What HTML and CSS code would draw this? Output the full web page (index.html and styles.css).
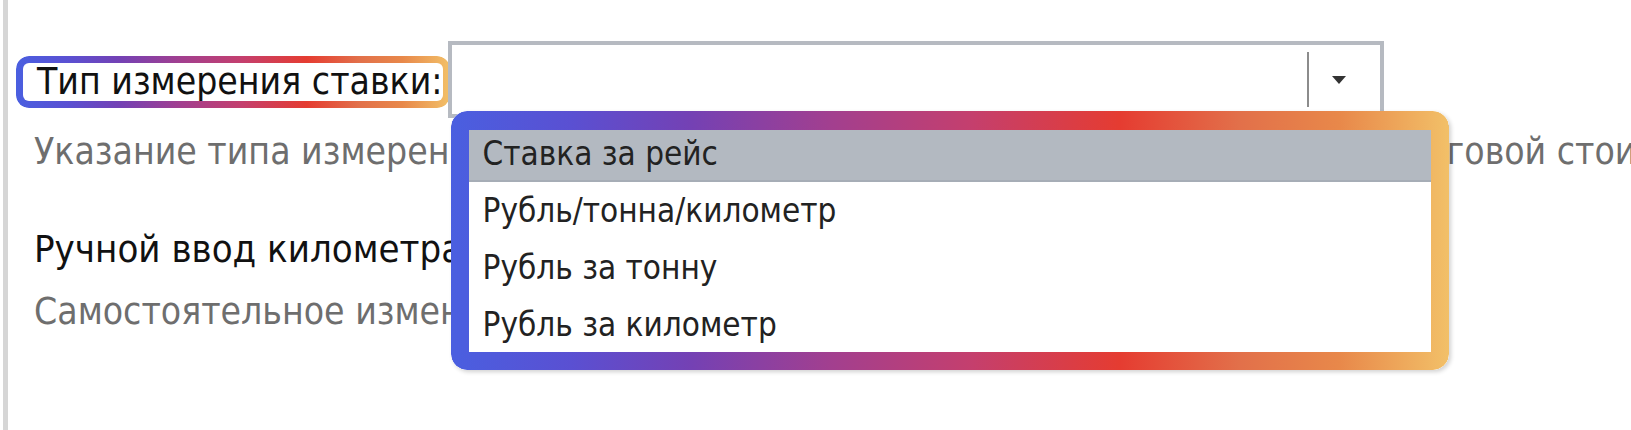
FILE: index.html
```html
<!DOCTYPE html>
<html>
	<head>
		<meta charset="UTF-8">
		<title>Тип измерения ставки</title>
		<link rel="stylesheet" href="styles.css">
	</head>
	<body>
		<div class="panel">
			<div class="field">
				<span class="field_label hl">Тип измерения ставки:</span>
				<div class="combo">
					<div class="combo_value"></div>
					<div class="combo_sep"></div>
					<div class="combo_btn"><i class="combo_arrow"></i></div>
					<!-- выпадающий список -->
					<div class="combo_popup">
						<ul>
							<li class="active">Ставка за рейс</li>
							<li>Рубль/тонна/километр</li>
							<li>Рубль за тонну</li>
							<li>Рубль за километр</li>
						</ul>
					</div>
				</div>
			</div>
			<div class="field_desc">Указание типа измерения ставки для расчета стоимости перевозки в части торговой стоимости</div>
			<div class="field_title">Ручной ввод километража</div>
			<div class="field_desc field_desc_last">Самостоятельное изменение километража</div>
		</div>
	</body>
</html>
```

FILE: styles.css
```css
*{
	margin: 0;
	padding: 0;
	box-sizing: border-box;
}
ul{
	list-style: none;
}
body{
	background-color: #fff;
	overflow: hidden;
	height: 430px;
	font-family: "DejaVu Sans Condensed", "DejaVu Sans", sans-serif;
	font-stretch: condensed;
}
.panel{
	height: 430px;
	margin-left: 3px;
	border-left: 5px solid #d6d6d6;
	padding: 41px 0 0 26px;
	white-space: nowrap;
}
.field{
	display: flex;
	align-items: center;
}
.field_label{
	margin: 5px 6px 0 3px;
	font-size: 37px;
	line-height: 46px;
	color: #111;
}
/* рамка-подсветка */
.hl{
	position: relative;
}
.hl::after{
	content: "";
	position: absolute;
	top: -3px;
	bottom: -3px;
	left: -21px;
	right: -8px;
	padding: 7px;
	border-radius: 13px;
	background: linear-gradient(90deg, #4a5fe0 0%, #5a50d2 12%, #7441b4 24%, #a23f8f 38%, #c43f6e 52%, #e53c31 67%, #e2704a 79%, #e8884a 89%, #f2c068 100%);
	-webkit-mask: linear-gradient(#000 0 0) content-box, linear-gradient(#000 0 0);
	-webkit-mask-composite: xor;
	mask-composite: exclude;
}
.combo{
	position: relative;
	width: 936px;
	height: 77px;
	border: 4px solid #b6bac1;
	background: #fff;
	display: flex;
	align-items: center;
}
.combo_value{
	flex: 1;
}
.combo_sep{
	width: 2px;
	height: 55px;
	background: #8c8c8c;
}
.combo_btn{
	width: 60px;
	margin-right: 11px;
	display: flex;
	justify-content: center;
}
.combo_arrow{
	width: 0;
	height: 0;
	border-left: 7px solid transparent;
	border-right: 7px solid transparent;
	border-top: 8px solid #333;
}
.combo_popup{
	position: absolute;
	z-index: 5;
	left: -1px;
	top: 66px;
	width: 998px;
	height: 259px;
	border-radius: 16px;
	background: #fff;
	overflow: hidden;
	box-shadow: 2px 2px 4px rgba(0,0,0,.18);
}
.combo_popup::after{
	content: "";
	position: absolute;
	top: 0;
	bottom: 0;
	left: 0;
	right: 0;
	padding: 19px 18px 18px 18px;
	border-radius: 16px;
	background: linear-gradient(90deg, #4a5fe0 0%, #5a50d2 12%, #7441b4 24%, #a23f8f 38%, #c43f6e 52%, #e53c31 67%, #e2704a 79%, #e8884a 89%, #f2c068 100%);
	-webkit-mask: linear-gradient(#000 0 0) content-box, linear-gradient(#000 0 0);
	-webkit-mask-composite: xor;
	mask-composite: exclude;
}
.combo_popup ul{
	padding-top: 14px;
}
.combo_popup li{
	height: 57px;
	line-height: 57px;
	padding-left: 31px;
	font-size: 33px;
	color: #222;
}
.combo_popup li.active{
	background: #b3b9c1;
	box-shadow: inset 0 -2px 0 #a6adb6;
}
.field_desc{
	margin-top: 12px;
	font-size: 37px;
	line-height: 44px;
	color: #6e6e6e;
}
.field_title{
	margin-top: 52px;
	font-size: 38px;
	line-height: 46px;
	color: #111;
}
.field_desc_last{
	margin-top: 18px;
}
```
